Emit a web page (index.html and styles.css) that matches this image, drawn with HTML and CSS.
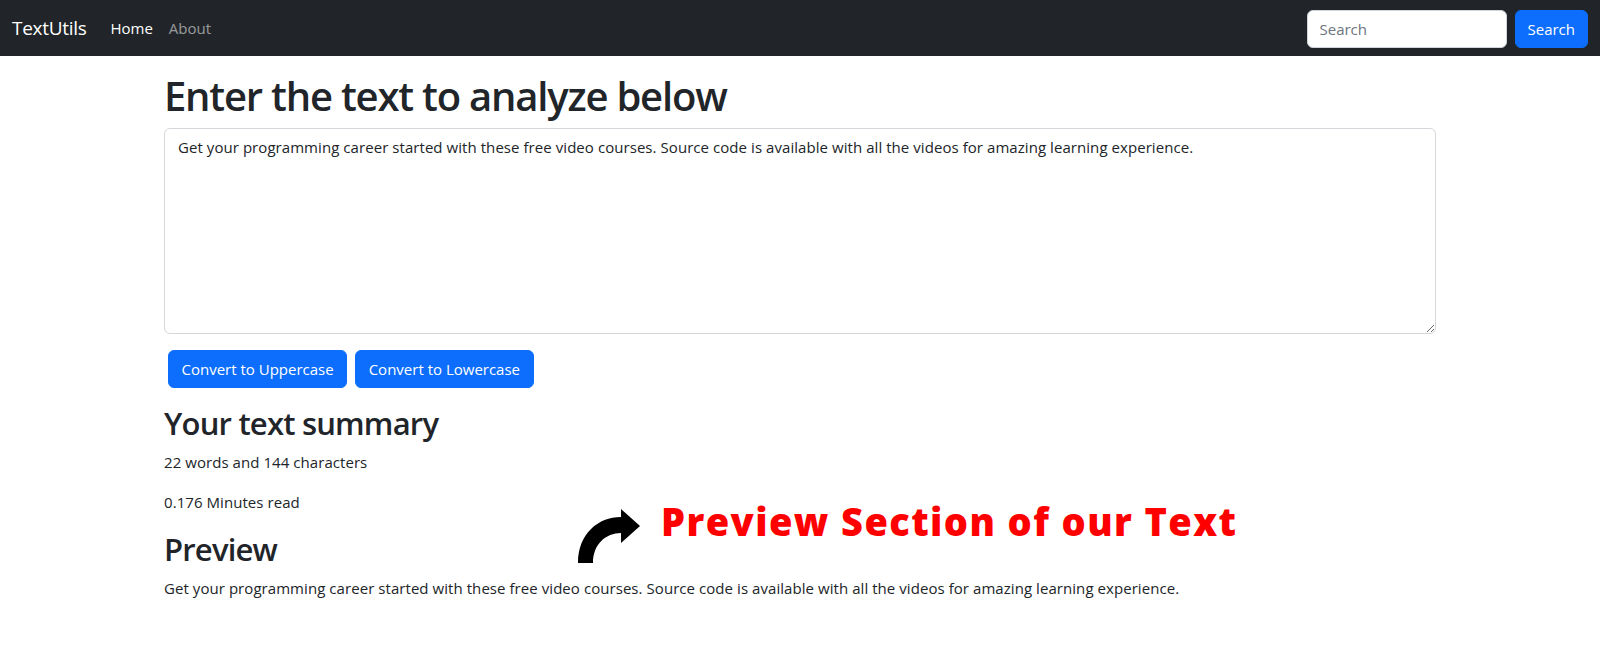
FILE: index.html
```html
<!DOCTYPE html>
<html lang="en">
<head>
<meta charset="utf-8">
<title>TextUtils</title>
<link rel="stylesheet" href="styles.css">
</head>
<body>
<nav class="navbar">
  <div class="nav-left">
    <a class="brand" href="#">TextUtils</a>
    <a class="nav-link active" href="#">Home</a>
    <a class="nav-link" href="#">About</a>
  </div>
  <form class="search">
    <input class="search-input" type="search" placeholder="Search">
    <button class="btn" type="button">Search</button>
  </form>
</nav>

<main class="container">
  <h1 class="title">Enter the text to analyze below</h1>
  <textarea class="text-box" rows="8">Get your programming career started with these free video courses. Source code is available with all the videos for amazing learning experience.</textarea>
  <div class="actions">
    <button class="btn btn-action" type="button">Convert to Uppercase</button>
    <button class="btn btn-action" type="button">Convert to Lowercase</button>
  </div>

  <section class="summary">
    <h2 class="subtitle">Your text summary</h2>
    <p class="line">22 words and 144 characters</p>
    <p class="line">0.176 Minutes read</p>
    <h2 class="subtitle">Preview</h2>
    <p class="line">Get your programming career started with these free video courses. Source code is available with all the videos for amazing learning experience.</p>

    <div class="annotation">
      <svg class="arrow" width="64" height="55" viewBox="0 0 64 55" aria-hidden="true">
        <path d="M0 54 C0 25 20 8 43 8 L43 0 L62 17 L43 34 L43 24 C28 24 15 35 15 54 Z" fill="#000"/>
      </svg>
      <span class="note">Preview Section of our Text</span>
    </div>
  </section>
</main>
</body>
</html>
```

FILE: styles.css
```css
* { box-sizing: border-box; }

html, body {
  margin: 0;
  padding: 0;
  background: #fff;
}

body {
  font-family: "Open Sans", "Noto Sans", sans-serif;
  font-size: 16px;
  line-height: 1.5;
  color: #212529;
}

.navbar {
  height: 56px;
  background: #212529;
  display: flex;
  align-items: center;
  justify-content: space-between;
  padding: 1px 12px 0 12px;
}

.nav-left {
  display: flex;
  align-items: center;
}

.brand {
  font-size: 19px;
  color: #fff;
  text-decoration: none;
  margin-right: 16px;
  letter-spacing: -0.3px;
}

.nav-link {
  font-size: 15px;
  color: rgba(255, 255, 255, 0.55);
  text-decoration: none;
  padding: 8px 8px;
}

.nav-link.active {
  color: #fff;
}

.search {
  display: flex;
  align-items: center;
  gap: 8px;
  margin: 0;
}

.search-input {
  width: 200px;
  height: 38px;
  border: 1px solid #ced4da;
  border-radius: 6px;
  padding: 6px 12px;
  font-family: inherit;
  font-size: 15px;
  color: #212529;
  background: #fff;
}

.search-input::placeholder {
  color: #6c757d;
}

.btn {
  height: 38px;
  border: 1px solid #0d6efd;
  border-radius: 6px;
  background: #0d6efd;
  color: #fff;
  font-family: inherit;
  font-size: 15px;
  padding: 6px 12px;
  cursor: pointer;
}

.btn-action {
  padding: 6px 12.5px;
}

.container {
  margin: 0 164px;
  padding-top: 16px;
}

.title {
  font-size: 40px;
  font-weight: 600;
  line-height: 48px;
  margin: 0 0 8px 0;
  letter-spacing: -1.2px;
}

.text-box {
  display: block;
  width: 100%;
  height: 206px;
  border: 1px solid #d3d7db;
  border-radius: 6px;
  padding: 6px 13px;
  font-family: inherit;
  font-size: 15px;
  line-height: 24px;
  color: #212529;
  resize: vertical;
  margin: 0 0 16px 0;
  letter-spacing: 0.06px;
}

.actions {
  display: flex;
  gap: 8px;
  padding-left: 4px;
}

.summary {
  position: relative;
  margin-top: 16px;
}

.subtitle {
  font-size: 31px;
  font-weight: 600;
  line-height: 38px;
  margin: 0 0 8px 0;
  letter-spacing: -0.8px;
}

.line {
  font-size: 15px;
  line-height: 24px;
  margin: 0 0 16px 0;
  letter-spacing: 0.06px;
}

.annotation {
  position: absolute;
  left: 414px;
  top: 91px;
  display: flex;
  align-items: flex-start;
  gap: 19px;
}

.arrow {
  display: block;
  margin-top: 14px;
}

.note {
  font-family: "Open Sans", "Noto Sans", sans-serif;
  font-weight: 800;
  font-size: 38px;
  line-height: 52px;
  color: #f00;
  letter-spacing: 1.4px;
}
```
